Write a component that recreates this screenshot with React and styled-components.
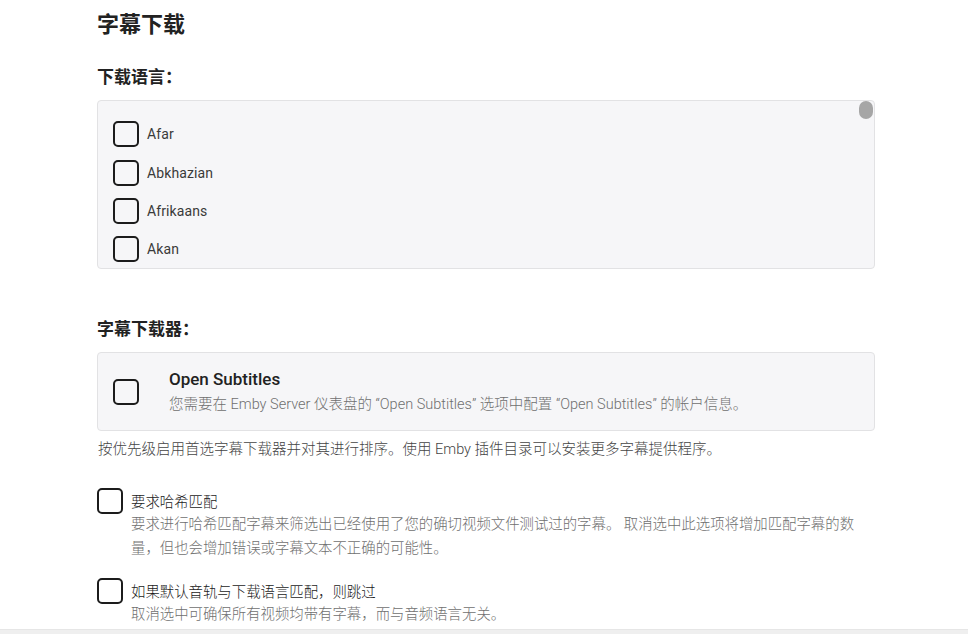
import React from "react";
import styled, { createGlobalStyle } from "styled-components";

const Global = createGlobalStyle`
  html, body { margin: 0; padding: 0; background: #fff; }
  body {
    font-family: Roboto, "Noto Sans CJK SC", sans-serif;
    color: #222;
    overflow: hidden;
    height: 634px;
  }
`;

const Page = styled.div`
  height: 634px;
  display: flex;
  flex-direction: column;
  overflow: hidden;
`;

const Content = styled.div`
  flex: 1;
  overflow: hidden;
  padding: 8px 93px 0 97px;
`;

const Footer = styled.div`
  height: 4px;
  background: #efefef;
  border-top: 1px solid #e6e6e6;
`;

const Title = styled.h1`
  margin: 0;
  font-size: 22px;
  font-weight: 700;
  line-height: 34px;
  color: #222;
`;

const SectionLabel = styled.h2`
  margin: ${p => p.$top}px 0 ${p => p.$bottom}px;
  font-size: 17px;
  font-weight: 700;
  line-height: 24px;
  color: #222;
`;

const ListBox = styled.div`
  position: relative;
  height: 169px;
  box-sizing: border-box;
  background: #f6f6f8;
  border: 1px solid #e2e2e4;
  border-radius: 4px;
  padding: 14px 15px 0;
  overflow: hidden;
`;

const Thumb = styled.div`
  position: absolute;
  top: 0;
  right: 1px;
  width: 14px;
  height: 18px;
  border-radius: 7px;
  background: #a6a6a6;
`;

const LangRow = styled.label`
  display: flex;
  align-items: center;
  height: 38.4px;
  gap: 8px;
  font-size: 14px;
  color: #3a3a3a;
  letter-spacing: 0.1px;
`;

const Box = styled.span`
  display: inline-block;
  flex: none;
  width: 26px;
  height: 26px;
  box-sizing: border-box;
  border: 2px solid #1c1c1c;
  border-radius: 5px;
`;

const Card = styled.div`
  display: flex;
  align-items: center;
  height: 79px;
  box-sizing: border-box;
  background: #f6f6f8;
  border: 1px solid #e2e2e4;
  border-radius: 4px;
  padding: 0 15px;
  gap: 30px;
`;

const CardText = styled.div`
  display: flex;
  flex-direction: column;
  gap: 4px;
  margin-top: 0;
`;

const CardTitle = styled.div`
  font-size: 17px;
  font-weight: 500;
  line-height: 22px;
  color: #222;
`;

const CardDesc = styled.div`
  font-size: 14.5px;
  font-weight: 300;
  line-height: 22px;
  color: #6f6f6f;
`;

const Help = styled.div`
  margin: 9px 0 0 1px;
  font-size: 14.5px;
  font-weight: 300;
  line-height: 20px;
  color: #444;
`;

const Option = styled.div`
  display: flex;
  gap: 8px;
  margin-top: ${p => p.$top}px;
`;

const OptionText = styled.div`
  display: flex;
  flex-direction: column;
  padding-top: 3px;
`;

const OptionLabel = styled.div`
  font-size: 14.4px;
  font-weight: 300;
  line-height: 24px;
  color: #1a1a1a;
`;

const OptionDesc = styled.div`
  font-size: 14.4px;
  font-weight: 300;
  line-height: 24px;
  color: #6f6f6f;
  max-width: ${p => p.$max}px;
  margin-top: ${p => p.$gap || 0}px;
`;

const languages = ["Afar", "Abkhazian", "Afrikaans", "Akan"];

export default function App() {
  return (
    <Page>
      <Global />
      <Content>
        <Title>字幕下载</Title>
        <SectionLabel $top={23} $bottom={11}>下载语言：</SectionLabel>
        <ListBox>
          <Thumb />
          {languages.map(l => (
            <LangRow key={l}>
              <Box />
              {l}
            </LangRow>
          ))}
        </ListBox>
        <SectionLabel $top={48} $bottom={11}>字幕下载器：</SectionLabel>
        <Card>
          <Box />
          <CardText>
            <CardTitle>Open Subtitles</CardTitle>
            <CardDesc>您需要在 Emby Server 仪表盘的 “Open Subtitles” 选项中配置 “Open Subtitles” 的帐户信息。</CardDesc>
          </CardText>
        </Card>
        <Help>按优先级启用首选字幕下载器并对其进行排序。使用 Emby 插件目录可以安装更多字幕提供程序。</Help>
        <Option $top={28}>
          <Box />
          <OptionText>
            <OptionLabel>要求哈希匹配</OptionLabel>
            <OptionDesc $max={726} $gap={-2}>要求进行哈希匹配字幕来筛选出已经使用了您的确切视频文件测试过的字幕。 取消选中此选项将增加匹配字幕的数量，但也会增加错误或字幕文本不正确的可能性。</OptionDesc>
          </OptionText>
        </Option>
        <Option $top={17}>
          <Box />
          <OptionText>
            <OptionLabel>如果默认音轨与下载语言匹配，则跳过</OptionLabel>
            <OptionDesc $max={726} $gap={-2}>取消选中可确保所有视频均带有字幕，而与音频语言无关。</OptionDesc>
          </OptionText>
        </Option>
      </Content>
      <Footer />
    </Page>
  );
}
